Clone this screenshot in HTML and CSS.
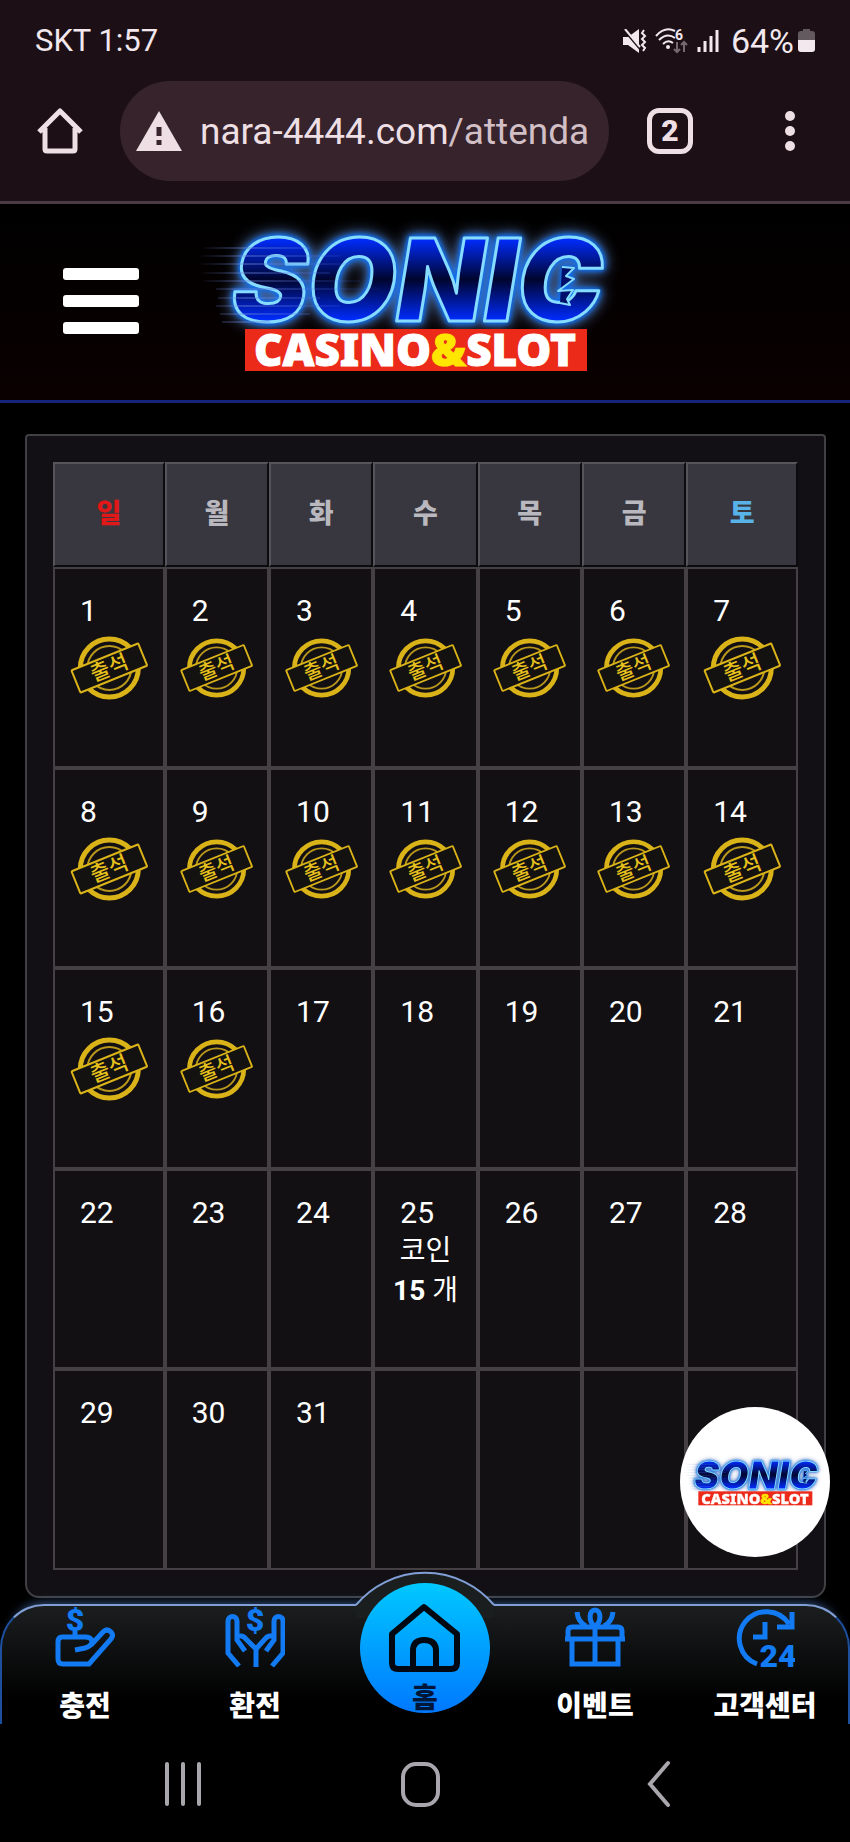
FILE: index.html
```html
<!DOCTYPE html>
<html lang="ko">
<head>
    <meta charset="UTF-8">
    <meta name="viewport" content="width=device-width, initial-scale=1.0">
    <title>SONIC CASINO&amp;SLOT</title>
    <link rel="stylesheet" href="styles.css">
</head>
<body>

    <!-- symboles partagés -->
    <svg class="defs" width="0" height="0" aria-hidden="true">
        <defs>
            <linearGradient id="letter" x1="0" y1="0" x2="0" y2="1">
                <stop offset="0.2" stop-color="#002cff"/>
                <stop offset="0.5" stop-color="#00052e"/>
                <stop offset="0.8" stop-color="#002cff"/>
            </linearGradient>
            <linearGradient id="speed" gradientUnits="userSpaceOnUse" x1="8" y1="0" x2="200" y2="0">
                <stop offset="0" stop-color="#6d86d8" stop-opacity="0"/>
                <stop offset="0.25" stop-color="#6d86d8" stop-opacity="0.8"/>
                <stop offset="1" stop-color="#3a5cff" stop-opacity="0"/>
            </linearGradient>
        </defs>
        <symbol id="logo" viewBox="0 0 450 180">
            <g class="logo-word">
                <text x="42" y="110">SONIC</text>
                <path d="M372 56L384 57L376 65L384 68L368 80L383 79L377 88L380 94L370 92" fill="#00106a" stroke-width="2"/>
            </g>
            <path d="M14 37H120M10 45H150M10 53H160M12 62H140M14 70H170M26 78H190M28 87H130M26 95H150M30 103H120M32 111H80" stroke="url(#speed)" stroke-width="1" fill="none"/>
            <rect x="55" y="118" width="342" height="42" fill="#ec2a1a"/>
            <text x="225" y="155" class="logo-sub">CASINO<tspan class="amp">&amp;</tspan>SLOT</text>
        </symbol>
        <symbol id="stamp" viewBox="0 0 78 64">
            <circle cx="39" cy="32" r="29" fill="none" stroke="#d9b318" stroke-width="5"/>
            <circle cx="39" cy="32" r="22" fill="none" stroke="#b8971a" stroke-width="2"/>
            <g transform="rotate(-22 39 32)">
                <rect x="3" y="20" width="72" height="24" rx="1" fill="#141210" stroke="#d9b318" stroke-width="2"/>
                <text x="39" y="39" class="stamp-text">출석</text>
            </g>
        </symbol>
    </svg>

    <div class="status-bar">
        <span>SKT 1:57</span>
        <div class="status-icons">
            <svg width="24" height="24" viewBox="0 0 24 24" fill="#f3e8ed">
                <path d="M0 8H5L16 0V24L5 16H0Z"/>
                <path d="M1 1L17 20" stroke="#1c1016" stroke-width="2"/>
                <path d="M2 0L17 18" stroke="#f3e8ed" stroke-width="2"/>
                <path d="M21 1l-2 3 3 3-3 3 3 3-3 3 3 3-2 3" fill="none" stroke="#f3e8ed" stroke-width="2"/>
            </svg>
            <svg width="34" height="26" viewBox="0 0 34 26" fill="none" stroke="#f3e8ed" stroke-width="2">
                <path d="M1 8Q10 -2 20 3M4 12Q12 4 20 10M8 16Q13 11 18 15"/>
                <circle cx="13" cy="19" r="1" fill="#f3e8ed"/>
                <text x="20" y="12" class="wifi-gen">6</text>
                <path d="M22 14V24M19 21l3 3 3-3M29 24V14M26 17l3-3 3 3" stroke="#77696f"/>
            </svg>
            <svg width="22" height="24" viewBox="0 0 22 24" stroke="#f3e8ed" stroke-width="3">
                <path d="M2 18V23M8 12V23M14 7V23M20 1V23"/>
            </svg>
            <span class="battery-text">64%</span>
            <svg width="17" height="24" viewBox="0 0 17 24">
                <path d="M5 0h7v2h2q3 0 3 3v7H0V5q0-3 3-3h2z" fill="#625a5e"/>
                <path d="M0 11h17v9q0 3-3 3H3q-3 0-3-3z" fill="#f3e8ed"/>
            </svg>
        </div>
    </div>

    <div class="browser-bar">
        <button class="icon-btn" aria-label="home">
            <svg width="46" height="46" viewBox="0 0 46 46" fill="none" stroke="#eedfe4" stroke-width="5" stroke-linejoin="round">
                <path d="M2 24L23 3L44 24M8 20V41Q8 43 10 43H36Q38 43 38 41V20"/>
            </svg>
        </button>
        <div class="url-pill">
            <svg width="46" height="40" viewBox="0 0 46 40">
                <path d="M23 0L46 40H0Z" fill="#eedfe4"/>
                <path d="M23 16V25M23 29V34" stroke="#36232b" stroke-width="5"/>
            </svg>
            <span class="url">nara-4444.com<span class="path">/attenda</span></span>
        </div>
        <button class="tab-count">2</button>
        <button class="icon-btn" aria-label="menu">
            <svg width="12" height="42" viewBox="0 0 12 42" fill="#eedfe4">
                <circle cx="6" cy="6" r="5"/><circle cx="6" cy="21" r="5"/><circle cx="6" cy="36" r="5"/>
            </svg>
        </button>
    </div>

    <header>
        <button class="burger" aria-label="menu"><i></i><i></i><i></i></button>
        <a href="#"><svg width="450" height="180" role="img" aria-label="SONIC CASINO&amp;SLOT"><use href="#logo"/></svg></a>
    </header>

    <main class="panel">
        <table class="calendar">
            <thead>
                <tr>
                    <th class="sun">일</th>
                    <th>월</th>
                    <th>화</th>
                    <th>수</th>
                    <th>목</th>
                    <th>금</th>
                    <th class="sat">토</th>
                </tr>
            </thead>
            <tbody>
                <tr>
                    <td><p>1</p><svg class="stamp"><use href="#stamp"/></svg></td>
                    <td><p>2</p><svg class="stamp"><use href="#stamp"/></svg></td>
                    <td><p>3</p><svg class="stamp"><use href="#stamp"/></svg></td>
                    <td><p>4</p><svg class="stamp"><use href="#stamp"/></svg></td>
                    <td><p>5</p><svg class="stamp"><use href="#stamp"/></svg></td>
                    <td><p>6</p><svg class="stamp"><use href="#stamp"/></svg></td>
                    <td><p>7</p><svg class="stamp"><use href="#stamp"/></svg></td>
                </tr>
                <tr>
                    <td><p>8</p><svg class="stamp"><use href="#stamp"/></svg></td>
                    <td><p>9</p><svg class="stamp"><use href="#stamp"/></svg></td>
                    <td><p>10</p><svg class="stamp"><use href="#stamp"/></svg></td>
                    <td><p>11</p><svg class="stamp"><use href="#stamp"/></svg></td>
                    <td><p>12</p><svg class="stamp"><use href="#stamp"/></svg></td>
                    <td><p>13</p><svg class="stamp"><use href="#stamp"/></svg></td>
                    <td><p>14</p><svg class="stamp"><use href="#stamp"/></svg></td>
                </tr>
                <tr>
                    <td><p>15</p><svg class="stamp"><use href="#stamp"/></svg></td>
                    <td><p>16</p><svg class="stamp"><use href="#stamp"/></svg></td>
                    <td><p>17</p></td>
                    <td><p>18</p></td>
                    <td><p>19</p></td>
                    <td><p>20</p></td>
                    <td><p>21</p></td>
                </tr>
                <tr>
                    <td><p>22</p></td>
                    <td><p>23</p></td>
                    <td><p>24</p></td>
                    <td><p>25</p><div class="coin">코인<br><b>15</b> 개</div></td>
                    <td><p>26</p></td>
                    <td><p>27</p></td>
                    <td><p>28</p></td>
                </tr>
                <tr>
                    <td><p>29</p></td>
                    <td><p>30</p></td>
                    <td><p>31</p></td>
                    <td></td>
                    <td></td>
                    <td></td>
                    <td></td>
                </tr>
            </tbody>
        </table>
    </main>

    <nav class="bottom-nav">
        <svg class="bump" width="160" height="48" viewBox="0 0 160 48">
            <path d="M11 35A90 90 0 0 1 149 35V48H11Z" fill="#1b1e1f"/>
            <path d="M11 35A90 90 0 0 1 149 35" fill="none" stroke="#7f9fd6" stroke-width="2"/>
        </svg>
        <a href="#">
            <svg width="60" height="60" viewBox="0 0 60 60">
                <path d="M20 43L30 41Q37 39 37 34Q36 30 30 30H7Q3 30 3 35V52Q3 57 8 57H34L56 32Q59 28 56 25Q52 21 48 25L36 38"/>
                <path d="M20 24V30"/>
                <text x="20" y="24" class="nav-dollar">$</text>
            </svg>
            <span>충전</span>
        </a>
        <a href="#">
            <svg width="60" height="60" viewBox="0 0 60 60">
                <path d="M14 59L3 46V14a4 4 0 0 1 9 0V33L20 44M12 29Q18 28 21 32L31 42V60"/>
                <path d="M47 59L58 46V14a4 4 0 0 0 -9 0V33L41 44M49 29Q43 28 40 32L31 42"/>
                <text x="30" y="24" class="nav-dollar">$</text>
            </svg>
            <span>환전</span>
        </a>
        <a href="#" class="home">
            <div class="home-circle">
                <svg width="71" height="70" viewBox="0 0 71 70">
                    <path d="M35 4L3 31V60Q3 66 9 66H62Q68 66 68 60V31ZM24 66V48Q24 37 35 37Q47 37 47 48V66"/>
                </svg>
            </div>
            <span>홈</span>
        </a>
        <a href="#">
            <svg width="60" height="60" viewBox="0 0 60 60">
                <path d="M3 34V24Q3 20 7 20H53Q57 20 57 24V34M0 32H60M7 33V57H53V33M30 20V57"/>
                <path d="M30 20C23 14 24 3 30 3S37 14 30 20M12 5Q13 15 21 19M48 5Q47 15 39 19"/>
            </svg>
            <span>이벤트</span>
        </a>
        <a href="#">
            <svg width="60" height="60" viewBox="0 0 60 60">
                <path d="M22 57A27 27 0 1 1 54 17M57 5V20H42M30 15V30H18"/>
                <text x="43" y="60" class="nav-24">24</text>
            </svg>
            <span>고객센터</span>
        </a>
    </nav>

    <div class="system-nav">
        <svg width="36" height="46" viewBox="0 0 36 46"><path d="M2 3V43M18 3V43M34 3V43"/></svg>
        <svg width="40" height="46" viewBox="0 0 40 46"><rect x="3" y="3" width="35" height="41" rx="13"/></svg>
        <svg width="32" height="48" viewBox="0 0 32 48"><path d="M29 3L11 24L29 45"/></svg>
    </div>

    <a href="#" class="chat" aria-label="SONIC CASINO&amp;SLOT"><svg width="150" height="60"><use href="#logo"/></svg></a>

</body>
</html>
```
FILE: styles.css
```css
* {
    box-sizing: border-box;
}

body {
    font-family: Roboto, "Noto Sans CJK KR", sans-serif;
    margin: 0;
    background-color: #000;
    color: #fff;
}

button {
    background: none;
    border: none;
    padding: 0;
    cursor: pointer;
}

svg {
    display: block;
    flex-shrink: 0;
}

.defs {
    position: absolute;
}

/* Barre d'état */
.status-bar {
    display: flex;
    justify-content: space-between;
    align-items: center;
    height: 81px;
    padding: 0 35px;
    background-color: #1c1016;
    color: #f3e8ed;
    font-size: 31px;
}

.status-icons {
    display: flex;
    align-items: center;
    gap: 8px;
}

.battery-text {
    margin: 0 -4px 0 4px;
    font-size: 34px;
}

.wifi-gen {
    font: bold 14px Roboto, sans-serif;
    fill: #f3e8ed;
    stroke: none;
}

/* Barre du navigateur */
.browser-bar {
    display: flex;
    align-items: center;
    height: 123px;
    padding: 0 54px 20px 37px;
    background-color: #1c1016;
    border-bottom: 3px solid #4b3c43;
}

.url-pill {
    flex: 1;
    display: flex;
    align-items: center;
    gap: 18px;
    height: 100px;
    margin: 0 38px 0 37px;
    padding: 0 16px;
    border-radius: 50px;
    background-color: #36232b;
    overflow: hidden;
}

.url {
    font-size: 37px;
    color: #eedfe4;
    white-space: nowrap;
}

.path {
    color: #d2bfc6;
}

.tab-count {
    width: 46px;
    height: 46px;
    margin-right: 91px;
    border: 5px solid #eedfe4;
    border-radius: 12px;
    color: #eedfe4;
    font: 900 30px/36px Roboto, sans-serif;
}

/* En-tête */
header {
    display: flex;
    align-items: center;
    gap: 51px;
    height: 199px;
    padding: 0 63px 3px;
    background-image: linear-gradient(#000, #0a0000);
    border-bottom: 3px solid #16257a;
}

.burger {
    display: flex;
    flex-direction: column;
    gap: 15px;
}

.burger i {
    width: 76px;
    height: 12px;
    border-radius: 3px;
    background-color: #fff;
}

/* Logo */
.logo-word {
    stroke: #86dcff;
    stroke-width: 3px;
    stroke-linejoin: round;
    filter: drop-shadow(0 0 2px #0a6cf0) drop-shadow(0 0 3px #0a6cf0) drop-shadow(0 0 7px #5a7ebc);
}

.logo-word text {
    font: italic 900 114px Inter, sans-serif;
    fill: url(#letter);
}

.logo-sub {
    font: 900 44px "Noto Sans", sans-serif;
    fill: #fff;
    stroke: #fff;
    stroke-width: 1px;
    text-anchor: middle;
}

.amp {
    fill: #ffe600;
    stroke: #ffe600;
}

/* Calendrier */
.panel {
    margin: 31px 24px 6px 25px;
    padding: 26px;
    background-color: #121014;
    border: 2px solid #404044;
    border-radius: 4px 4px 14px 14px;
}

.calendar {
    width: 100%;
    height: 1108px;
    table-layout: fixed;
    border-collapse: separate;
    border-spacing: 0;
}

.calendar th {
    height: 105px;
    padding: 0 0 6px;
    background-color: #38373f;
    border: 2px solid;
    border-color: #56555c #0c0b0e #0c0b0e #56555c;
    color: #b9b8be;
    font-size: 27px;
    font-weight: 900;
}

.calendar th.sun,
.calendar th.sat {
    width: 15%;
}

.calendar th.sun {
    color: #e01818;
}

.calendar th.sat {
    color: #58b4e8;
}

.calendar td {
    height: 200px;
    padding: 22px 0 0;
    background-color: #131014;
    border: 2px solid #444044;
    vertical-align: top;
}

.calendar p {
    margin: 0;
    padding-left: 25px;
    font-size: 30px;
    line-height: 40px;
}

.stamp {
    width: 73%;
    height: 64px;
    margin: 5px auto 0;
}

.stamp-text {
    font: 500 21px "Noto Sans CJK KR", sans-serif;
    fill: #e6c01c;
    text-anchor: middle;
}

.coin {
    margin-top: -2px;
    font-size: 28px;
    line-height: 40px;
    text-align: center;
}

/* Menu du bas */
.bottom-nav {
    position: relative;
    z-index: 1;
    display: flex;
    height: 120px;
}

.bottom-nav::before {
    content: "";
    position: absolute;
    inset: 0;
    border: 2px solid;
    border-color: #7f9fd6 #1d4f9c transparent;
    border-bottom: none;
    border-radius: 44px 44px 0 0;
    background-image: linear-gradient(#1b1e1f, #000 80%);
    box-shadow: 0 -12px 10px -10px rgba(90, 140, 220, 0.5);
}

.bump {
    position: absolute;
    left: 50%;
    top: -34px;
    margin-left: -80px;
}

.bottom-nav a {
    position: relative;
    flex: 1;
    display: flex;
    flex-direction: column;
    align-items: center;
    gap: 20px;
    padding-top: 3px;
    color: #fff;
    font-size: 28px;
    font-weight: 900;
    line-height: 40px;
    text-decoration: none;
    white-space: nowrap;
}

.bottom-nav a svg {
    fill: none;
    stroke: #127af2;
    stroke-width: 5px;
}

.bottom-nav .nav-dollar,
.bottom-nav .nav-24 {
    font: 900 32px Roboto, sans-serif;
    fill: #127af2;
    stroke: none;
    text-anchor: middle;
}

.bottom-nav .home {
    gap: 0;
    padding: 0;
    margin-top: -21px;
    color: #001638;
}

.home-circle {
    width: 130px;
    height: 130px;
    padding: 20px 29px;
    border-radius: 50%;
    background-image: linear-gradient(#00c8ff, #0078ff);
}

.bottom-nav .home svg {
    stroke: #020812;
    stroke-width: 6px;
    stroke-linejoin: round;
}

.home span {
    margin-top: -34px;
}

/* Navigation système */
.system-nav {
    display: flex;
    justify-content: space-between;
    align-items: center;
    height: 118px;
    padding: 2px 179px 0 165px;
}

.system-nav svg {
    fill: none;
    stroke: #a9a7ad;
    stroke-width: 4px;
    stroke-linecap: round;
}

/* Bouton flottant */
.chat {
    position: fixed;
    z-index: 2;
    right: 20px;
    bottom: 285px;
    display: flex;
    align-items: center;
    width: 150px;
    height: 150px;
    border-radius: 50%;
    background-color: #fff;
}
```
